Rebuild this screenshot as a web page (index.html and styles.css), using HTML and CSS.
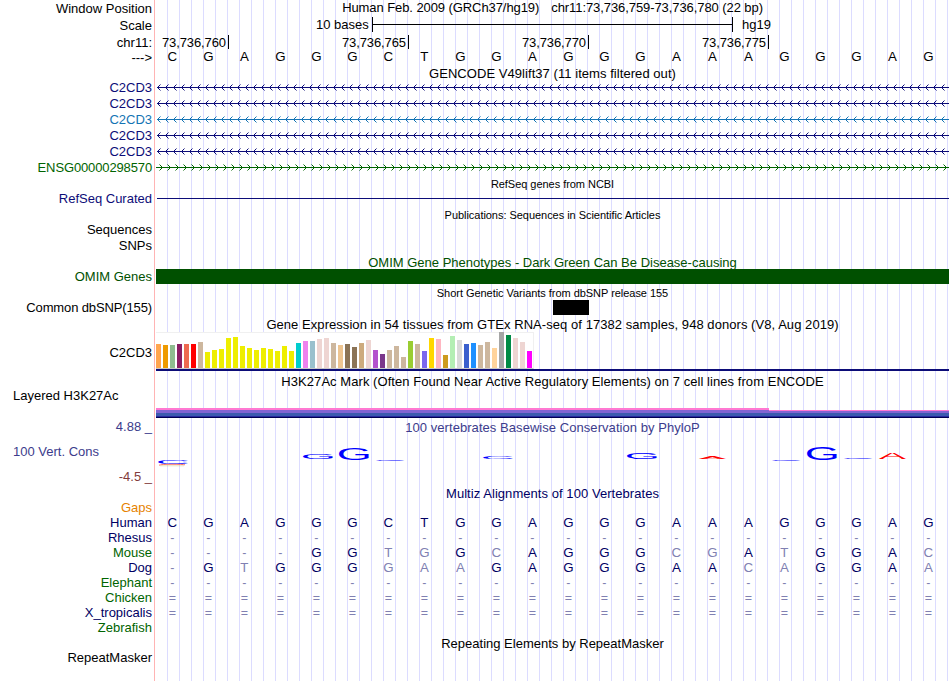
FILE: index.html
```html
<!DOCTYPE html>
<html lang="en">
  <head>
    <meta charset="UTF-8" />
    <meta name="viewport" content="width=device-width, initial-scale=1" />
    <title>Genome Browser</title>
    <link rel="stylesheet" href="styles.css">
  </head>
  <body>
    <main class="browser">
      <!-- Ruler -->
      <div class="row position">
        <div class="label">Window Position</div>
        <div class="title"><span>Human Feb. 2009 (GRCh37/hg19)</span><span>chr11:73,736,759-73,736,780 (22 bp)</span></div>
      </div>
      <div class="row scale">
        <div class="label">Scale</div>
        <div class="scale-plot">
          <span class="scale-size">10 bases</span>
          <span class="scale-bar"></span>
          <span>hg19</span>
        </div>
      </div>
      <div class="row ticks">
        <div class="label">chr11:</div>
        <div class="tick-plot">
          <span class="tick">73,736,760</span>
          <span class="tick">73,736,765</span>
          <span class="tick">73,736,770</span>
          <span class="tick">73,736,775</span>
        </div>
      </div>
      <div class="row sequence">
        <div class="label">---&gt;</div>
        <div class="bases" data-seq="CGAGGGCTGGAGGGAAAGGGAG"></div>
      </div>

      <!-- GENCODE -->
      <div class="row head wide"><div class="title">GENCODE V49lift37 (11 items filtered out)</div></div>
      <div class="row gene navy"><div class="label">C2CD3</div><div class="strand" data-dir="minus"></div></div>
      <div class="row gene navy"><div class="label">C2CD3</div><div class="strand" data-dir="minus"></div></div>
      <div class="row gene blue"><div class="label">C2CD3</div><div class="strand" data-dir="minus"></div></div>
      <div class="row gene navy"><div class="label">C2CD3</div><div class="strand" data-dir="minus"></div></div>
      <div class="row gene navy"><div class="label">C2CD3</div><div class="strand" data-dir="minus"></div></div>
      <div class="row gene green"><div class="label tight">ENSG00000298570</div><div class="strand" data-dir="plus"></div></div>

      <!-- RefSeq -->
      <div class="row head-small"><div class="title">RefSeq genes from NCBI</div></div>
      <div class="row gene navy"><div class="label">RefSeq Curated</div><div class="refseq-line"></div></div>

      <!-- Publications -->
      <div class="row head-small"><div class="title">Publications: Sequences in Scientific Articles</div></div>
      <div class="row gene"><div class="label">Sequences</div></div>
      <div class="row snps"><div class="label">SNPs</div></div>

      <!-- OMIM -->
      <div class="row head omim"><div class="title">OMIM Gene Phenotypes - Dark Green Can Be Disease-causing</div></div>
      <div class="row gene omim"><div class="label">OMIM Genes</div><div class="omim-bar"></div></div>

      <!-- dbSNP -->
      <div class="row head-small"><div class="title">Short Genetic Variants from dbSNP release 155</div></div>
      <div class="row dbsnp"><div class="label tight">Common dbSNP(155)</div><div class="snp-block"></div></div>

      <!-- GTEx -->
      <div class="row wide"><div class="title">Gene Expression in 54 tissues from GTEx RNA-seq of 17382 samples, 948 donors (V8, Aug 2019)</div></div>
      <div class="row gtex">
        <div class="label">C2CD3</div>
        <div class="gtex-plot"><div class="gtex-bars" id="gtexBars"></div></div>
      </div>

      <!-- H3K27Ac -->
      <div class="row head wide"><div class="title">H3K27Ac Mark (Often Found Near Active Regulatory Elements) on 7 cell lines from ENCODE</div></div>
      <div class="row h3k">
        <div class="label left">Layered H3K27Ac</div>
        <div class="h3k-plot"><div class="h3k-high"></div><div class="h3k-low"></div></div>
      </div>

      <!-- Conservation -->
      <div class="row phylo-head wide">
        <div class="label">4.88 _</div>
        <div class="title">100 vertebrates Basewise Conservation by PhyloP</div>
      </div>
      <div class="row phylo">
        <div class="phylo-labels">
          <div class="label left">100 Vert. Cons</div>
          <div class="label low">-4.5 _</div>
        </div>
        <svg class="logo" id="logo" width="793" height="50">
          <path d="M3 29.2Q5 28.3 16 28.3T29 28.8" fill="none" stroke="#ff7868" />
          <path d="M4 29.8H28" stroke="#d2c878" stroke-width="0.5" />
        </svg>
      </div>

      <!-- Multiz -->
      <div class="row head align wide"><div class="title">Multiz Alignments of 100 Vertebrates</div></div>
      <div class="row align gaps"><div class="label">Gaps</div></div>
      <div class="row align"><div class="label">Human</div><div class="bases" data-seq="CGAGGGCTGGAGGGAAAGGGAG"></div></div>
      <div class="row align"><div class="label">Rhesus</div><div class="bases" data-seq="----------------------"></div></div>
      <div class="row align far"><div class="label">Mouse</div><div class="bases" data-seq="----GGTGGCAGGGCGATGGAC"></div></div>
      <div class="row align"><div class="label">Dog</div><div class="bases" data-seq="-GTGGGGAAGAGGGAACAGGAA"></div></div>
      <div class="row align far"><div class="label">Elephant</div><div class="bases" data-seq="----------------------"></div></div>
      <div class="row align far"><div class="label">Chicken</div><div class="bases" data-seq="======================"></div></div>
      <div class="row align"><div class="label">X_tropicalis</div><div class="bases" data-seq="======================"></div></div>
      <div class="row align far last"><div class="label">Zebrafish</div></div>

      <!-- RepeatMasker -->
      <div class="row head"><div class="title">Repeating Elements by RepeatMasker</div></div>
      <div class="row"><div class="label">RepeatMasker</div></div>
    </main>

    <script src="script.js"></script>
  </body>
</html>
```
FILE: styles.css
```css
/* Basic Reset */
* {
  margin: 0;
  padding: 0;
  box-sizing: border-box;
}

body {
  font-family: "Liberation Sans", Arial, sans-serif;
  font-size: 13px;
  line-height: 15px;
  color: #000;
  background-color: #fff;
  overflow: hidden;
}

/* Red divider plus the vertical guide lines */
.browser {
  width: 949px;
  height: 681px;
  padding-top: 1px;
  background-image:
    linear-gradient(#ffb4b4, #ffb4b4),
    repeating-linear-gradient(to right, transparent 0 11px, #dcdcff 11px 12px);
  background-position: 154px 0, 156px 0;
  background-size: 1px 100%, 793px 100%;
  background-repeat: no-repeat;
}

/* Rows */
.row {
  display: grid;
  grid-template-columns: 156px 793px;
  height: 15px;
  white-space: nowrap;
}

.label {
  grid-column: 1;
  padding-right: 4px;
  text-align: right;
}

.label.left {
  padding-left: 13px;
  text-align: left;
}

.label.tight {
  letter-spacing: -0.13px;
}

.title {
  grid-column: 2;
  text-align: center;
}

.wide .title {
  letter-spacing: 0.055px;
}

.head {
  height: 14px;
}

.head-small {
  font-size: 11px;
}

.head-small .title {
  padding-top: 1px;
  letter-spacing: -0.04px;
}

.gene {
  height: 16px;
}

.navy {
  color: #0c0c78;
}

.blue {
  color: #1474b4;
}

.green {
  color: #006400;
}

/* Ruler */
.position {
  height: 17px;
}

.position .title {
  display: flex;
  justify-content: center;
  gap: 12px;
  margin-top: -1px;
  letter-spacing: -0.08px;
}

.scale {
  height: 17px;
}

.scale-plot {
  display: flex;
  margin-top: -1px;
  padding-left: 160px;
}

.scale-size {
  width: 56px;
}

.scale-bar {
  width: 361px;
  height: 15px;
  margin-right: 9px;
  border: solid #000;
  border-width: 0 1px;
  background: linear-gradient(#000, #000) 0 7px / 100% 1px no-repeat;
}

.tick-plot {
  display: flex;
}

.tick {
  width: 180px;
  height: 14px;
  padding-right: 2px;
  border-right: 1px solid #000;
  text-align: right;
  letter-spacing: -0.1px;
}

.tick:first-child {
  width: 73px;
}

.sequence {
  height: 16px;
}

.sequence .bases {
  margin-top: -1px;
}

.bases {
  display: flex;
  margin-left: -1.6px;
  font-size: 13.3px;
}

.base {
  flex: 0 0 36px;
  text-align: center;
}

/* Genes */
.strand svg {
  display: block;
}

.refseq-line {
  height: 1px;
  margin: 7px 0 0 1px;
  background-color: #0c0c78;
}

.snps {
  height: 17px;
}

.omim {
  color: #005000;
}

.omim-bar {
  height: 15px;
  background-color: #005000;
}

.dbsnp {
  height: 17px;
}

.snp-block {
  width: 36px;
  height: 15px;
  margin-left: 397px;
  background-color: #000;
}

/* Gene expression */
.gtex {
  height: 42px;
}

.gtex .label {
  padding-top: 13px;
}

.gtex-plot {
  height: 39px;
  border-bottom: 2px solid #0c0c78;
}

.gtex-bars {
  display: flex;
  align-items: flex-end;
  gap: 2px;
  width: 378px;
  height: 37px;
  border: solid #f0f0f0;
  border-width: 1px 1px 1px 0;
  border-bottom-color: #c8c8c8;
  background-color: #fff;
}

.gtex-bar {
  flex: 0 0 5px;
}

/* H3K27Ac */
.h3k {
  height: 31px;
}

.h3k-plot {
  display: flex;
  align-items: flex-end;
  height: 30px;
}

.h3k-high {
  width: 613px;
  height: 10px;
  background: linear-gradient(#ff78d2 0 2px, #8264d2 2px 5px, #3c5aaf 5px 8px, #2828a0 8px 9px, #000050 9px);
}

.h3k-low {
  width: 180px;
  height: 8px;
  background: linear-gradient(#ff78d2 0 1px, #8264d2 1px 3px, #3c5aaf 3px 6px, #2828a0 6px 7px, #000050 7px);
}

/* Conservation */
.phylo-head {
  height: 17px;
  color: #3c3c8c;
}

.phylo-head .title {
  margin-top: 1px;
}

.phylo {
  height: 50px;
  color: #3c3c8c;
}

.phylo-labels {
  padding-top: 8px;
}

.phylo-labels .low {
  margin-top: 10px;
  color: #823c3c;
}

.logo {
  display: block;
  overflow: visible;
}

/* Alignments */
.align {
  color: #000064;
}

.far .label {
  color: #006400;
}

.gaps {
  color: #e68200;
}

.mismatch {
  color: #8080b2;
}

/* Unaligned positions, drawn as - or = */
.unaligned {
  padding-top: 1px;
  font-size: 12.5px;
}

.last {
  height: 16px;
}
```
FILE: script.js
```js
const SVG_NS = "http://www.w3.org/2000/svg";
const reference = "CGAGGGCTGGAGGGAAAGGGAG";

// Base letters, one 36px cell per position
document.querySelectorAll(".bases").forEach((row) => {
  [...row.dataset.seq].forEach((letter, i) => {
    const base = document.createElement("span");
    base.className = letter === reference[i] ? "base" : "base mismatch";
    if (letter === "-" || letter === "=") {
      base.classList.add("unaligned");
    }
    base.textContent = letter;
    row.appendChild(base);
  });
});

// Intron lines with an arrow every 8px
document.querySelectorAll(".strand").forEach((strand) => {
  const minus = strand.dataset.dir === "minus";
  let d = minus ? "M1 7.5H793" : "M0 7.5H793";
  for (let x = 0; x < 793; x += 8) {
    d += minus
      ? `M${x + 4.5} 4.5L${x + 1.5} 7.5L${x + 4.5} 10.5`
      : `M${x + 3.5} 4.5L${x + 6.5} 7.5L${x + 3.5} 10.5`;
  }
  strand.innerHTML = `<svg width="793" height="15"><path d="${d}" fill="none" stroke="currentColor"/></svg>`;
});

// Expression per tissue: [color, height]
const tissues = [
  ["#ffa54f", 24], ["#ee9a00", 23], ["#8fbc8f", 23], ["#8b1c62", 24],
  ["#ee6a50", 24], ["#ff0000", 24], ["#cdb79e", 26], ["#eeee00", 16],
  ["#eeee00", 18], ["#eeee00", 19], ["#eeee00", 30], ["#eeee00", 31],
  ["#eeee00", 22], ["#eeee00", 20], ["#eeee00", 18], ["#eeee00", 20],
  ["#eeee00", 19], ["#eeee00", 17], ["#eeee00", 22], ["#eeee00", 17],
  ["#00cdcd", 25], ["#ee82ee", 27], ["#9ac0cd", 27], ["#eed5d2", 29],
  ["#eed5d2", 30], ["#cdb79e", 25], ["#eec591", 23], ["#8b7355", 24],
  ["#8b7355", 21], ["#cdaa7d", 25], ["#eed5d2", 28], ["#b452cd", 18],
  ["#7a378b", 14], ["#cdb79e", 18], ["#cdb79e", 22], ["#cdb79e", 11],
  ["#9acd32", 27], ["#cdb79e", 24], ["#7a67ee", 17], ["#ffd700", 30],
  ["#ffb6c1", 29], ["#cd9b1d", 13], ["#b4eeb4", 32], ["#d9d9d9", 28],
  ["#3a5fcd", 24], ["#1e90ff", 25], ["#cdb79e", 23], ["#cdb79e", 26],
  ["#ffd39b", 20], ["#a6a6a6", 36], ["#008b45", 33], ["#eed5d2", 30],
  ["#eed5d2", 26], ["#ff00ff", 17],
];
const gtexBars = document.getElementById("gtexBars");
tissues.forEach(([color, height]) => {
  const bar = document.createElement("div");
  bar.className = "gtex-bar";
  bar.style.height = height + "px";
  bar.style.backgroundColor = color;
  gtexBars.appendChild(bar);
});

// Conservation logo letters: [letter, left, top, width, height, color]
const logoLetters = [
  ["C", 2, 24, 30, 4, "#0000ff"],
  ["G", 147, 18, 30, 5.4, "#0000ff"],
  ["G", 183, 12, 30, 12, "#0000ff"],
  ["C", 220, 24, 29, 0.8, "#0000ff"],
  ["C", 327, 21, 30, 2, "#0000ff"],
  ["G", 471, 16.8, 30, 6.2, "#0000ff"],
  ["A", 543, 21, 27, 2, "#ff0000"],
  ["C", 616, 24, 29, 0.8, "#0000ff"],
  ["G", 651, 11, 30, 13, "#0000ff"],
  ["C", 688, 22, 29, 0.8, "#0000ff"],
  ["A", 723, 17, 27, 6, "#ff0000"],
];
// Ink box of each glyph at 100px: [left, width, height, below baseline]
const glyphs = {
  A: [0.4, 66, 68.8, 0],
  C: [5, 63.7, 71, 1],
  G: [5, 66.5, 71, 1],
};
const logo = document.getElementById("logo");
logoLetters.forEach(([letter, left, top, width, height, color]) => {
  const [gx, gw, gh, drop] = glyphs[letter];
  const sx = width / gw;
  const sy = height / gh;
  const text = document.createElementNS(SVG_NS, "text");
  text.setAttribute("font-size", "100");
  text.setAttribute("fill", color);
  text.setAttribute(
    "transform",
    `translate(${left - gx * sx} ${top + height - drop * sy}) scale(${sx} ${sy})`
  );
  text.textContent = letter;
  logo.appendChild(text);
});
```
